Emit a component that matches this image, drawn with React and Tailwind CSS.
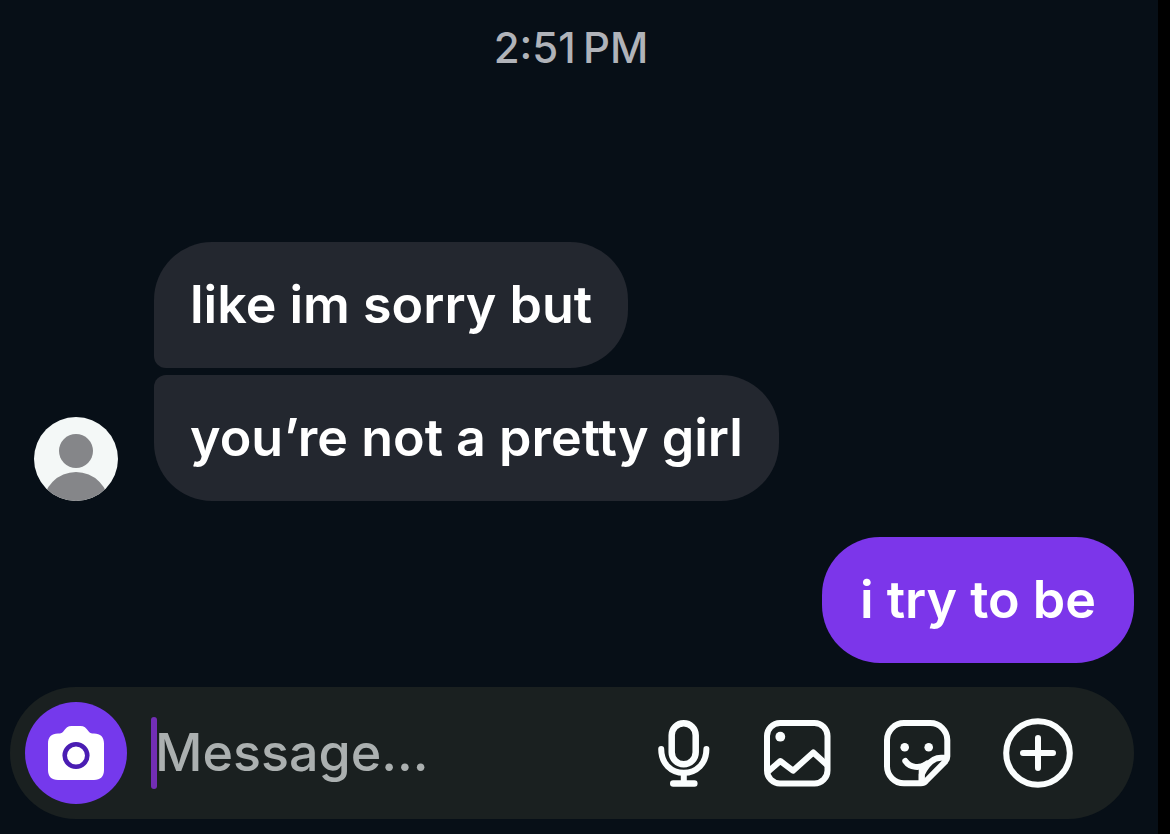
const LINE = {
  fill: 'none',
  stroke: 'currentColor',
  strokeWidth: 6,
  strokeLinecap: 'round',
  strokeLinejoin: 'round',
  'aria-hidden': true,
};

function CameraIcon() {
  return (
    <svg width="56" height="54" viewBox="0 0 56 54" aria-hidden="true">
      <path
        fill="#fff"
        d="M10 7.500h1.500c2 0 3.200-.8 4.200-2.400C17.800 1.800 20 0 23.500 0h9c3.500 0 5.700 1.800 7.800 5.100 1 1.600 2.200 2.400 4.200 2.400H46c6.500 0 10 3.500 10 10V44c0 6.500-3.500 10-10 10H10C3.500 54 0 50.500 0 44V17.500c0-6.500 3.500-10 10-10Z"
      />
      <circle cx="28" cy="29.500" r="11.300" fill="none" stroke="#4a1db3" strokeWidth="4.600" />
    </svg>
  );
}

function MicIcon() {
  return (
    <svg width="54" height="70" viewBox="0 0 54 70" {...LINE}>
      <rect x="14.700" y="5.200" width="24" height="41" rx="12" strokeWidth="6.500" />
      <path d="M4.200 31C4.200 45.500 14 54.800 26.800 54.800S49.400 45.500 49.400 31" />
      <path d="M26.800 55V65" />
      <path d="M16.200 65.500H37.400" strokeWidth="6.400" />
    </svg>
  );
}

function ImageIcon() {
  return (
    <svg width="68" height="68" viewBox="0 0 68 68" {...LINE}>
      <rect x="4" y="4" width="60.500" height="60.500" rx="13" />
      <circle cx="17.300" cy="17.700" r="4.900" fill="currentColor" stroke="none" />
      <path d="M5.500 52.300L17.300 42L30 51.700L50.300 33.500L63.500 45.500" />
    </svg>
  );
}

function StickerIcon() {
  return (
    <svg width="68" height="68" viewBox="0 0 68 68" {...LINE}>
      <path d="M38 64.300H21A17 17 0 0 1 4 47.300V21A17 17 0 0 1 21 4.100H47.300A17 17 0 0 1 64.300 21V37.500Q64.300 40.500 62.200 42.600L43 62Q41 64.300 38 64.300Z" />
      <path d="M38.700 62V55.500C44 44.500 50 38.800 58 38.800H63" />
      <path d="M38.700 62V51" />
      <path d="M22.300 42C27 48.800 37 50 44 44.500" />
      <circle cx="21.700" cy="28.300" r="4.300" fill="currentColor" stroke="none" />
      <circle cx="45.700" cy="28.300" r="4.300" fill="currentColor" stroke="none" />
    </svg>
  );
}

function PlusIcon() {
  return (
    <svg width="70" height="70" viewBox="0 0 70 70" {...LINE}>
      <circle cx="35" cy="35" r="31.800" />
      <path d="M35 20V50M20 35H50" />
    </svg>
  );
}

function Avatar() {
  return (
    <svg
      className="shrink-0"
      width="84"
      height="84"
      viewBox="0 0 84 84"
      role="img"
      aria-label="Profile photo"
    >
      <clipPath id="avatar-clip">
        <circle cx="42" cy="42" r="42" />
      </clipPath>
      <g clipPath="url(#avatar-clip)">
        <rect width="84" height="84" fill="#f4f8f7" />
        <circle cx="42" cy="34" r="17" fill="#858689" />
        <circle cx="42" cy="88" r="33" fill="#858689" />
      </g>
    </svg>
  );
}

const BUBBLE = 'py-8 text-[52px] leading-[62px] font-semibold text-white';
const INCOMING = `${BUBBLE} bg-[#23272f] px-9`;
const OUTGOING = `${BUBBLE} bg-[#7c36ea] px-[38px]`;

export default function App() {
  return (
    <div className="min-h-screen bg-black pr-3 font-['Inter','Liberation_Sans',sans-serif]">
      <main className="flex min-h-screen flex-col bg-[#070f17] pb-[15px]">
        <time className="mt-5 mr-4 self-center text-[42px] leading-[56px] font-medium text-[#b0b3b9]">
          {'2:51\u202fPM'}
        </time>

        <section className="mt-auto flex flex-col pr-6 pl-[34px]" aria-label="Messages">
          <div className="flex items-end gap-9">
            <Avatar />
            <div className="flex flex-col items-start gap-[7px]">
              <p className={`rounded-[58px] rounded-bl-xl ${INCOMING}`}>like im sorry but</p>
              <p className={`rounded-[58px] rounded-tl-xl ${INCOMING}`}>
                you’re not a pretty girl
              </p>
            </div>
          </div>
          <p className={`mt-9 self-end rounded-[58px] ${OUTGOING}`}>i try to be</p>
        </section>

        <form
          className="mt-6 mr-6 ml-[10px] flex h-[132px] items-center rounded-full bg-[#1a2020] pr-[61px] pl-[15px] text-[#fafdfd]"
          onSubmit={(e) => e.preventDefault()}
        >
          <button
            type="button"
            aria-label="Camera"
            className="flex size-[102px] shrink-0 items-center justify-center rounded-full bg-[#7539ec]"
          >
            <CameraIcon />
          </button>
          <span className="ml-6 h-[72px] w-[6px] shrink-0 rounded-sm bg-[#722eb5]" />
          <input
            type="text"
            aria-label="Message"
            placeholder="Message..."
            className="-ml-[2px] min-w-0 flex-1 bg-transparent text-[52px] leading-[64px] font-medium outline-none placeholder:text-[#abb0b0] placeholder:opacity-100"
          />
          <div className="flex shrink-0 items-center gap-[52px]">
            <button type="button" aria-label="Record voice message">
              <MicIcon />
            </button>
            <button type="button" aria-label="Choose photo">
              <ImageIcon />
            </button>
            <button type="button" aria-label="Stickers">
              <StickerIcon />
            </button>
            <button type="button" aria-label="More">
              <PlusIcon />
            </button>
          </div>
        </form>
      </main>
    </div>
  );
}
